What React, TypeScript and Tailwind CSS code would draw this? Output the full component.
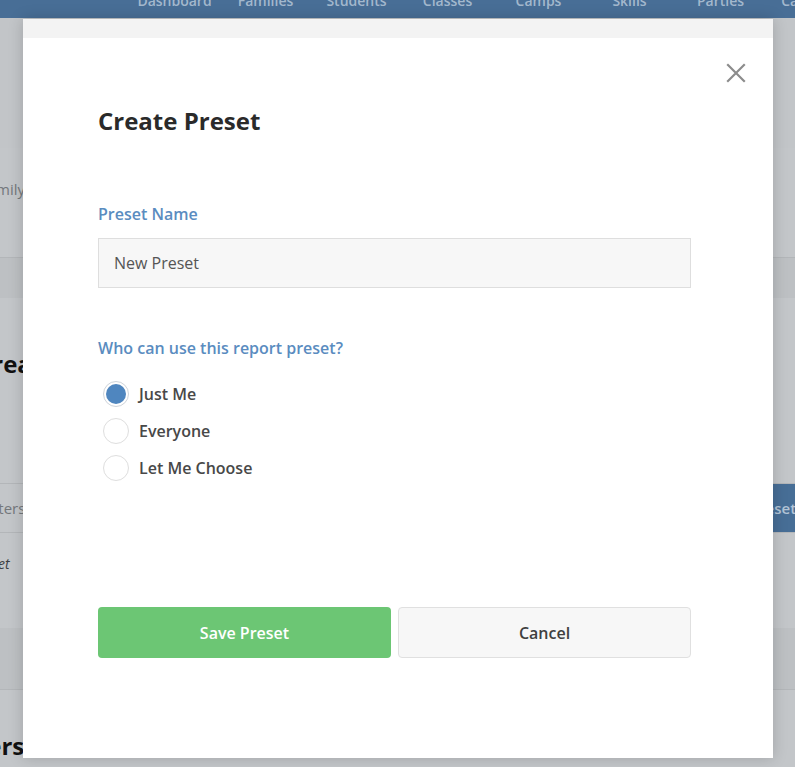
import { useState } from 'react';

const navItems = ['Dashboard', 'Families', 'Students', 'Classes', 'Camps', 'Skills', 'Parties', 'Calendar'];

const options = ['Just Me', 'Everyone', 'Let Me Choose'];

const CloseIcon = () => (
  <svg width="20" height="20" viewBox="0 0 20 20" fill="none">
    <path d="M2 2L18 18M18 2L2 18" stroke="#8c8c8c" strokeWidth="2.2" strokeLinecap="square" />
  </svg>
);

const Radio = ({ checked }: { checked: boolean }) => (
  <span
    className={`flex h-[26px] w-[26px] items-center justify-center rounded-full border bg-white ${
      checked ? 'border-[#cfd4da]' : 'border-[#dedede]'
    }`}
  >
    {checked && <span className="h-[20px] w-[20px] rounded-full bg-[#4f86bf]" />}
  </span>
);

const Background = () => (
  <div className="min-h-[767px] bg-[#bdc0c3]">
    <nav className="h-[18px] overflow-hidden bg-[#486e96]">
      <div className="-mt-[9px] flex pl-[129px]">
        {navItems.map((item) => (
          <span
            key={item}
            className="w-[91px] shrink-0 text-center text-[14px] font-semibold leading-5 text-[#a3b8cd]"
          >
            {item}
          </span>
        ))}
      </div>
    </nav>
    <div className="h-[130px] bg-[#c2c5c8]" />
    <div className="flex h-[110px] items-center border-b border-[#b3b6b9] bg-[#c3c6c9]">
      <span className="-ml-[20px] pb-[26px] text-[15px] text-[#74787c]">Family</span>
    </div>
    <div className="h-[40px]" />
    <div className="bg-[#c3c6c9]">
      <div className="flex h-[185px] items-start">
        <h2 className="-ml-[23px] pt-[48px] text-[24px] font-bold text-[#111]">Create</h2>
      </div>
      <div className="flex h-[50px] items-center justify-between overflow-hidden border-y border-[#b3b6b9]">
        <span className="-ml-[17px] text-[15px] text-[#74787c]">Filters</span>
        <span className="flex h-full w-[150px] shrink-0 items-center bg-[#476e96] pl-[111px] text-[15px] font-semibold text-[#b3c4d6]">
          Reset
        </span>
      </div>
      <div className="h-[95px] pt-[18px]">
        <span className="-ml-[50px] text-[14px] italic text-[#3c4044]">No preset</span>
      </div>
    </div>
    <div className="h-[62px] border-b border-[#b3b6b9]" />
    <div className="h-[77px] bg-[#c3c6c9] pt-[38px]">
      <span className="-ml-[58px] text-[24px] font-bold text-[#111]">Others</span>
    </div>
  </div>
);

const App = () => {
  const [who, setWho] = useState('Just Me');
  const [name, setName] = useState('New Preset');

  return (
    <div className="relative overflow-hidden font-['Open_Sans',sans-serif]" style={{ height: 767 }}>
      <Background />
      <div className="absolute left-[23px] top-[19px] h-[739px] w-[750px] bg-white shadow-[0_0_14px_rgba(0,0,0,0.18)]">
        <div className="h-[19px] bg-[#f3f3f3]" />
        <button className="absolute right-[27px] top-[44px]" aria-label="Close">
          <CloseIcon />
        </button>
        <div className="pl-[75px] pr-[82px] pt-[67px]">
          <h1 className="text-[24px] font-bold leading-8 text-[#2a2a2a]">Create Preset</h1>

          <label className="mt-[66px] block text-[16px] font-semibold leading-[22px] text-[#5a8cc0]">
            Preset Name
          </label>
          <input
            value={name}
            onChange={(e) => setName(e.target.value)}
            className="mt-[13px] block h-[50px] w-full border border-[#dedede] bg-[#f7f7f7] px-[15px] text-[16px] text-[#555] outline-none"
          />

          <p className="mt-[49px] text-[16px] font-semibold leading-[22px] text-[#5a8cc0]">
            Who can use this report preset?
          </p>
          <div className="mt-[16px] flex flex-col">
            {options.map((opt) => (
              <label
                key={opt}
                className="flex h-[37px] cursor-pointer items-center gap-[10px] pl-[5px]"
                onClick={() => setWho(opt)}
              >
                <Radio checked={who === opt} />
                <span className="text-[16px] font-semibold text-[#484848]">{opt}</span>
              </label>
            ))}
          </div>

          <div className="mt-[121px] flex gap-[7px]">
            <button className="h-[51px] w-[293px] rounded-[4px] bg-[#6cc674] text-[16px] font-semibold text-white">
              Save Preset
            </button>
            <button className="h-[51px] w-[293px] rounded-[4px] border border-[#e0e0e0] bg-[#f7f7f7] text-[16px] font-semibold text-[#3f3f3f]">
              Cancel
            </button>
          </div>
        </div>
      </div>
    </div>
  );
};

export default App;
